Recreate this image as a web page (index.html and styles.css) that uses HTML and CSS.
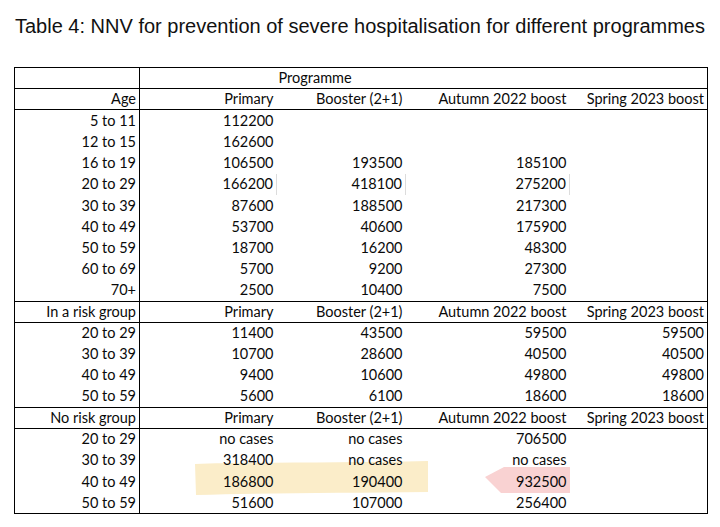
FILE: index.html
```html
<!DOCTYPE html>
<html>
<head>
<meta charset="utf-8">
<link rel="stylesheet" href="styles.css">
</head>
<body>
<h1 class="title">Table 4: NNV for prevention of severe hospitalisation for different programmes</h1>
<div class="wrap">
  <svg class="marks" width="693" height="446" viewBox="0 0 693 446">
    <path d="M181 397 C 240 395, 330 396, 414 394 L 414 425 C 330 426, 250 426, 182 428 Z" fill="#fbedc9"/>
    <path d="M471 410 L 490 400 L 556 400 L 556 426 L 487 426 Z" fill="#f9d2d2"/>
  </svg>
  <table class="nnv">
    <colgroup>
      <col class="c-label"><col class="c-prim"><col class="c-boost"><col class="c-aut"><col class="c-spr">
    </colgroup>
    <tbody>
      <tr class="sep"><td></td><td></td><td class="left">Programme</td><td></td><td></td></tr>
      <tr class="sep"><td>Age</td><td>Primary</td><td>Booster (2+1)</td><td>Autumn 2022 boost</td><td>Spring 2023 boost</td></tr>
      <tr><td>5 to 11</td><td>112200</td><td></td><td></td><td></td></tr>
      <tr><td>12 to 15</td><td>162600</td><td></td><td></td><td></td></tr>
      <tr><td>16 to 19</td><td>106500</td><td>193500</td><td>185100</td><td></td></tr>
      <tr><td>20 to 29</td><td class="tick">166200</td><td class="tick">418100</td><td class="tick">275200</td><td></td></tr>
      <tr><td>30 to 39</td><td>87600</td><td>188500</td><td>217300</td><td></td></tr>
      <tr><td>40 to 49</td><td>53700</td><td>40600</td><td>175900</td><td></td></tr>
      <tr><td>50 to 59</td><td>18700</td><td>16200</td><td>48300</td><td></td></tr>
      <tr><td>60 to 69</td><td>5700</td><td>9200</td><td>27300</td><td></td></tr>
      <tr class="sep"><td>70+</td><td>2500</td><td>10400</td><td>7500</td><td></td></tr>
      <tr class="sep"><td>In a risk group</td><td>Primary</td><td>Booster (2+1)</td><td>Autumn 2022 boost</td><td>Spring 2023 boost</td></tr>
      <tr><td>20 to 29</td><td>11400</td><td>43500</td><td>59500</td><td>59500</td></tr>
      <tr><td>30 to 39</td><td>10700</td><td>28600</td><td>40500</td><td>40500</td></tr>
      <tr><td>40 to 49</td><td>9400</td><td>10600</td><td>49800</td><td>49800</td></tr>
      <tr class="sep"><td>50 to 59</td><td>5600</td><td>6100</td><td>18600</td><td>18600</td></tr>
      <tr class="sep"><td>No risk group</td><td>Primary</td><td>Booster (2+1)</td><td>Autumn 2022 boost</td><td>Spring 2023 boost</td></tr>
      <tr><td>20 to 29</td><td>no cases</td><td>no cases</td><td>706500</td><td></td></tr>
      <tr><td>30 to 39</td><td>318400</td><td>no cases</td><td>no cases</td><td></td></tr>
      <tr><td>40 to 49</td><td>186800</td><td>190400</td><td>932500</td><td></td></tr>
      <tr><td>50 to 59</td><td>51600</td><td>107000</td><td>256400</td><td></td></tr>
    </tbody>
  </table>
</div>
</body>
</html>
```

FILE: styles.css
```css
html, body {
  margin: 0;
  padding: 0;
  background: #ffffff;
}

.title {
  margin: 0;
  padding: 15px 0 0 15px;
  font-family: "Liberation Sans", Arial, sans-serif;
  font-weight: normal;
  font-size: 20px;
  line-height: 22px;
  color: #111111;
}

.wrap {
  position: relative;
  z-index: 0;
  width: 693px;
  margin: 30px 0 0 14px;
}

.marks {
  position: absolute;
  left: 0;
  top: 0;
  z-index: -1;
}

.nnv {
  border-collapse: collapse;
  table-layout: fixed;
  width: 693px;
  border: 1px solid #000;
  font-family: Lato, "Open Sans", sans-serif;
  font-size: 14.5px;
  color: #0a0a0a;
}

.c-label { width: 125px; }
.c-prim { width: 137px; }
.c-boost { width: 129px; }
.c-aut { width: 164px; }
.c-spr { width: 138px; }

.nnv td {
  height: 21.24px;
  padding: 0 3px 0 0;
  line-height: 16px;
  text-align: right;
  vertical-align: middle;
  white-space: nowrap;
  box-sizing: border-box;
}

.nnv td:first-child {
  border-right: 1px solid #000;
}

.nnv tr.sep td {
  border-bottom: 1px solid #000;
}

.nnv td.left {
  text-align: left;
  padding-left: 2px;
}

.nnv td.tick {
  border-right: 1px solid #dcdcdc;
}
```
